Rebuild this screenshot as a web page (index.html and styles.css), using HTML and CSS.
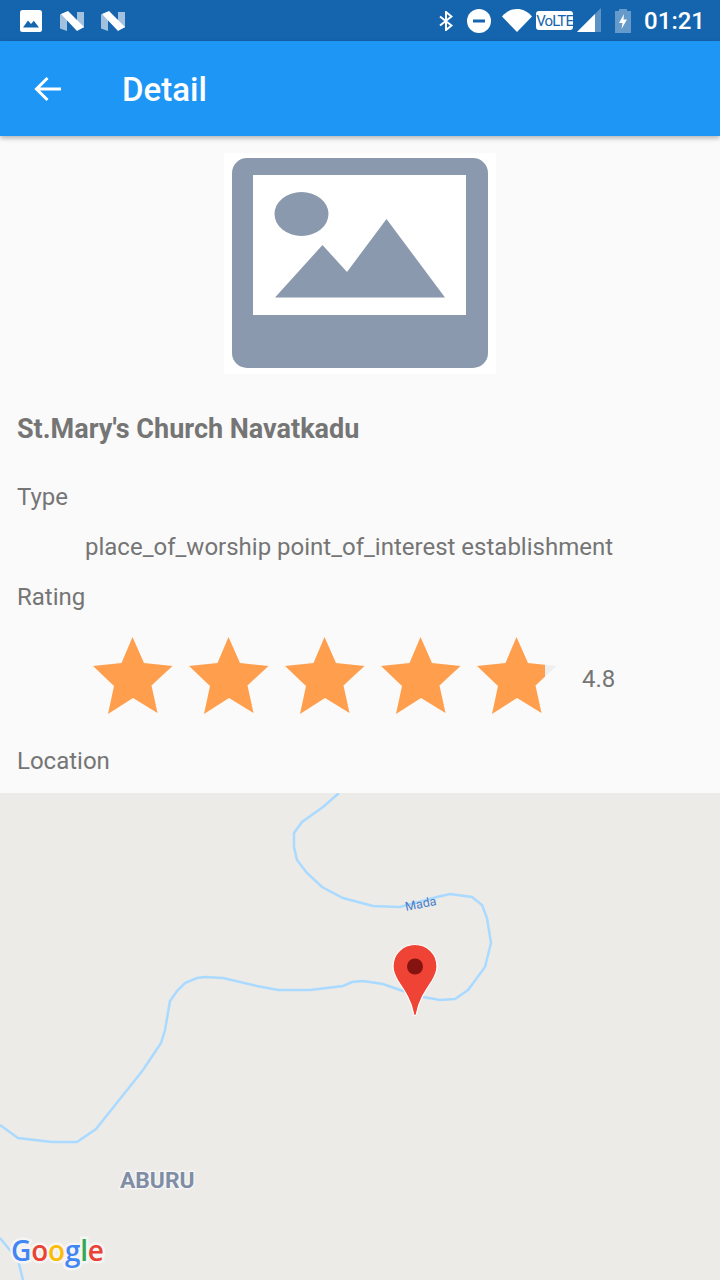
FILE: index.html
```html
<!DOCTYPE html>
<html>

<head>
  <title>Detail</title>
  <link rel="stylesheet" href="styles.css">
</head>

<body>
  <div class="statusbar">
    <div class="status-left">
      <svg class="ic-picture" viewBox="0 0 22 22">
        <rect width="22" height="22" rx="2.5" fill="#fff" />
        <path d="M3 17.500 8 10.500 11 14 13.800 10.800 19 17.500Z" fill="#1565ae" />
      </svg>
      <svg class="ic-n" viewBox="0 0 24 20">
        <path d="M0 3.500 7 1V20L0 17.500ZM17 1 24 1V16.500L17 19Z" fill="#fff" opacity=".6" />
        <path d="M1 3 8 0 24 16 17 20Z" fill="#fff" />
      </svg>
      <svg class="ic-n" viewBox="0 0 24 20">
        <path d="M0 3.500 7 1V20L0 17.500ZM17 1 24 1V16.500L17 19Z" fill="#fff" opacity=".6" />
        <path d="M1 3 8 0 24 16 17 20Z" fill="#fff" />
      </svg>
    </div>
    <div class="status-right">
      <svg class="ic-bt" viewBox="0 0 14 20">
        <path d="M1 5.500 12.500 14.500 7 19V1L12.500 5.500 1 14.500" fill="none" stroke="#fff" stroke-width="2" />
      </svg>
      <svg class="ic-dnd" viewBox="0 0 24 24">
        <circle cx="12" cy="12" r="12" fill="#fff" />
        <rect x="6" y="10.500" width="12" height="3" fill="#1565ae" />
      </svg>
      <svg class="ic-wifi" viewBox="0 0 30 23">
        <path d="M0 7.500C8 -2.500 22 -2.500 30 7.500L15 23Z" fill="#fff" />
      </svg>
      <div class="volte">VoLTE</div>
      <svg class="ic-signal" viewBox="0 0 24 24">
        <path d="M0 24 24 0V24Z" fill="#fff" opacity=".3" />
        <path d="M0 24 18 6V24Z" fill="#fff" />
      </svg>
      <svg class="ic-battery" viewBox="0 0 16 24">
        <path d="M0 2H4V0H12V2H16V24H0Z" fill="#fff" opacity=".35" />
        <path d="M9 5 4 14H7.500L6.500 20 12 10.500H8.500Z" fill="#fff" />
      </svg>
      <span class="time">01:21</span>
    </div>
  </div>

  <div class="appbar">
    <svg class="back" viewBox="0 0 28 26">
      <path d="M27 13H3M13.500 2 2.500 13 13.500 24" fill="none" stroke="#fff" stroke-width="3" />
    </svg>
    <span class="appbar-title">Detail</span>
  </div>

  <div class="photo">
    <svg class="photo-icon" viewBox="0 0 256 210">
      <rect width="256" height="210" rx="15" fill="#8a99ae" />
      <rect x="21" y="17" width="213" height="140" fill="#fff" />
      <ellipse cx="69.500" cy="56" rx="27" ry="22" fill="#8a99ae" />
      <path d="M43 139.500 90.500 87 115 114 154.500 61 213 139.500Z" fill="#8a99ae" />
    </svg>
  </div>

  <h2 class="name">St.Mary's Church Navatkadu</h2>

  <div class="label label-type">Type</div>
  <div class="types">place_of_worship point_of_interest establishment</div>
  <div class="label label-rating">Rating</div>

  <div class="rating">
    <svg class="star" viewBox="0 0 80 78">
      <polygon class="star-full" points="39.500,0 51,26 79.500,29 58.500,48.500 64.500,76 40,61 15,77 21,49 0,29 28.500,26" />
    </svg>
    <svg class="star" viewBox="0 0 80 78">
      <polygon class="star-full" points="39.500,0 51,26 79.500,29 58.500,48.500 64.500,76 40,61 15,77 21,49 0,29 28.500,26" />
    </svg>
    <svg class="star" viewBox="0 0 80 78">
      <polygon class="star-full" points="39.500,0 51,26 79.500,29 58.500,48.500 64.500,76 40,61 15,77 21,49 0,29 28.500,26" />
    </svg>
    <svg class="star" viewBox="0 0 80 78">
      <polygon class="star-full" points="39.500,0 51,26 79.500,29 58.500,48.500 64.500,76 40,61 15,77 21,49 0,29 28.500,26" />
    </svg>
    <svg class="star" viewBox="0 0 80 78">
      <defs>
        <linearGradient id="part">
          <stop offset="0.86" stop-color="#ff9f4d" />
          <stop offset="0.86" stop-color="#eeeeee" />
        </linearGradient>
      </defs>
      <polygon fill="url(#part)" points="39.500,0 51,26 79.500,29 58.500,48.500 64.500,76 40,61 15,77 21,49 0,29 28.500,26" />
    </svg>
    <span class="rating-value">4.8</span>
  </div>

  <div class="label label-location">Location</div>

  <svg class="map" viewBox="0 793 720 487">
    <polyline class="river" points="339,793 323,807 302,822 294,833 294,847 297,860 307,873 322,887 343,898 373,906 400,907 437,897 450,894 472,897 482,905 487,918 491,943 485,967 468,990 455,999 440,1000 423,997 400,990 383,984 363,981 352,982 343,986 310,990 278,990 257,986 223,978 205,977 197,978 185,983 177,991 170,1001 165,1030 161,1043 143,1070 96,1129 77,1142 52,1142 18,1138 0,1125" />
    <polyline class="river" points="0,1238 18,1260 23,1280" />
    <text class="river-name" transform="translate(406 911) rotate(-11)">Mada</text>
    <text class="place-name" x="120" y="1187.500">ABURU</text>
    <path d="M415 944.500C402.500 944.500 393 954 393 966.500C393 972 395 976 398 981C404 990 411 1000 413.500 1013.500C414 1016.500 416 1016.500 416.500 1013.500C419 1000 426 990 432 981C435 976 437 972 437 966.500C437 954 427.500 944.500 415 944.500Z" fill="#ee4335" stroke="#fff" stroke-width="1.200" />
    <circle cx="415" cy="966.500" r="8" fill="#85130f" />
    <text class="google" x="11" y="1261"><tspan fill="#4285f4">G</tspan><tspan fill="#ea4335">o</tspan><tspan fill="#fbbc05">o</tspan><tspan fill="#4285f4">g</tspan><tspan fill="#34a853">l</tspan><tspan fill="#ea4335">e</tspan></text>
  </svg>
</body>

</html>
```

FILE: styles.css
```css
body {
  margin: 0;
  width: 720px;
  height: 1280px;
  overflow: hidden;
  display: flex;
  flex-direction: column;
  font-family: 'Roboto', sans-serif;
  background-color: #fafafa;
  color: #757575;
}

.statusbar {
  height: 41px;
  flex: none;
  display: flex;
  justify-content: space-between;
  align-items: center;
  padding: 0 15px 0 20px;
  background: #1565ae;
}

.status-left,
.status-right {
  display: flex;
  align-items: center;
}

.ic-picture {
  width: 22px;
  height: 22px;
  margin-right: 18px;
}

.ic-n {
  width: 24px;
  height: 20px;
  margin-right: 17px;
}

.ic-bt {
  width: 14px;
  height: 20px;
}

.ic-dnd {
  width: 24px;
  height: 24px;
  margin-left: 14px;
}

.ic-wifi {
  width: 30px;
  height: 23px;
  margin-left: 11px;
}

.volte {
  width: 37px;
  height: 19px;
  margin-left: 4px;
  border-radius: 3px;
  background: #fff;
  color: #1565ae;
  font-size: 15px;
  line-height: 20px;
  letter-spacing: -0.9px;
  text-align: center;
}

.ic-signal {
  width: 24px;
  height: 24px;
  margin-left: 4px;
  margin-top: -2px;
}

.ic-battery {
  width: 16px;
  height: 24px;
  margin-left: 14px;
}

.time {
  margin-left: 13px;
  color: #fff;
  font-size: 24px;
  font-weight: 500;
}

.appbar {
  height: 95px;
  flex: none;
  display: flex;
  align-items: center;
  background: #1e96f5;
  box-shadow: 0 2px 5px rgba(0, 0, 0, 0.3);
  position: relative;
}

.back {
  width: 28px;
  height: 26px;
  margin-left: 34px;
}

.appbar-title {
  margin: 2px 0 0 60px;
  color: #fff;
  font-size: 33px;
  font-weight: 500;
}

.photo {
  width: 272px;
  height: 221px;
  margin: 17px auto 0;
  display: flex;
  align-items: center;
  justify-content: center;
  background: #fff;
}

.photo-icon {
  width: 256px;
  height: 210px;
  margin-bottom: 2px;
  filter: blur(0.5px);
}

.name {
  margin: 34px 0 0 17px;
  font-size: 27px;
  font-weight: 700;
  line-height: 42px;
}

.label {
  margin-left: 17px;
  font-size: 24px;
  line-height: 40px;
}

.label-type {
  margin-top: 27px;
}

.types {
  margin: 10px 0 0 85px;
  font-size: 24px;
  line-height: 40px;
}

.label-rating {
  margin-top: 10px;
}

.rating {
  height: 78px;
  margin: 20px 0 0 93px;
  display: flex;
  align-items: center;
}

.star {
  width: 80px;
  height: 78px;
  margin-right: 16px;
}

.star-full {
  fill: #ff9f4d;
}

.rating-value {
  margin: 6px 0 0 9px;
  font-size: 24px;
}

.label-location {
  margin-top: 26px;
}

.map {
  display: block;
  width: 720px;
  height: 487px;
  margin-top: 12px;
  flex: none;
  background: #ecebe7;
}

.river {
  fill: none;
  stroke: #aadaff;
  stroke-width: 2.5;
}

.river-name {
  font-size: 12.500px;
  fill: #4a80c9;
}

.place-name {
  font-size: 22.800px;
  font-weight: 700;
  fill: #7f8ea6;
  stroke: #f6f5f3;
  stroke-width: 3px;
  paint-order: stroke;
}

.google {
  font-family: 'Open Sans', sans-serif;
  font-size: 28px;
  font-weight: 600;
  letter-spacing: -0.2px;
  stroke: #f6f5f3;
  stroke-width: 5px;
  paint-order: stroke;
}
```
